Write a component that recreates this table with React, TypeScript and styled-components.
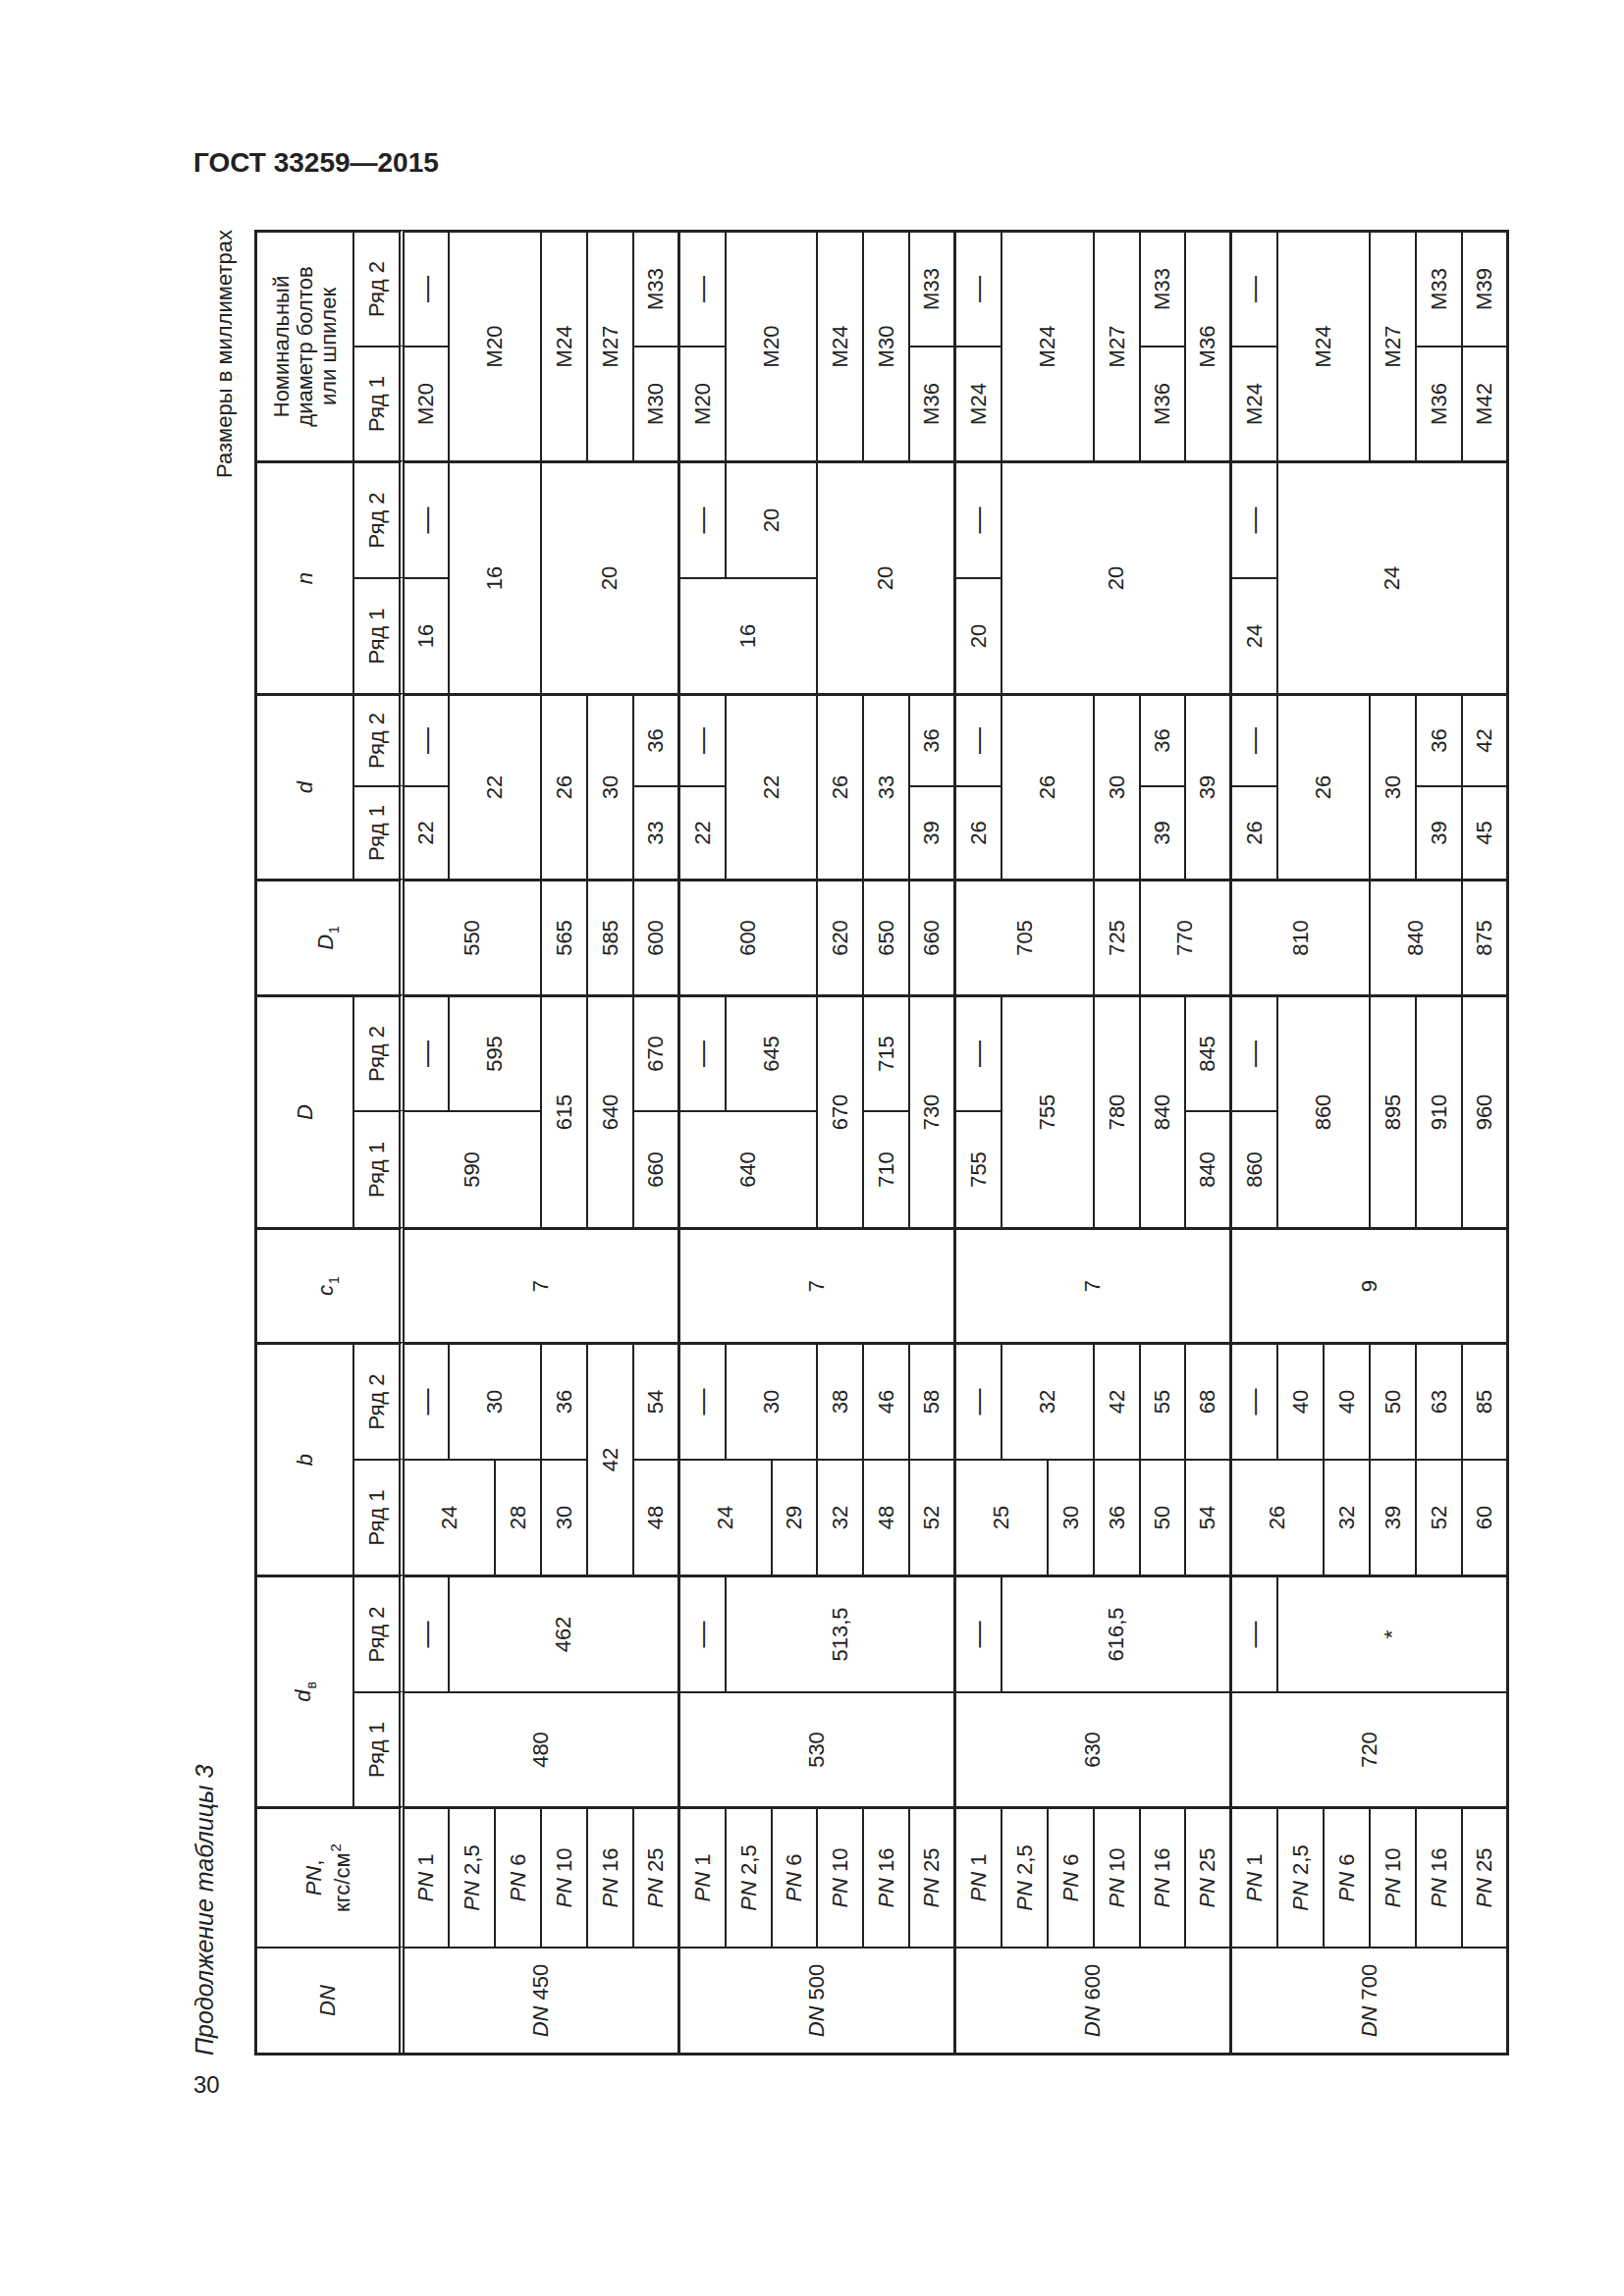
import React from 'react';
import styled, { createGlobalStyle } from 'styled-components';

const GlobalStyle = createGlobalStyle`
  html, body {
    margin: 0;
    padding: 0;
    background: #fff;
  }
  body {
    font-family: "Liberation Sans", Arial, sans-serif;
    color: #222;
  }
`;

// widths of the 16 columns of the table in its own (unrotated) orientation
const COLS = [108, 143, 117, 119, 118, 119, 117, 119, 118, 118, 95, 94, 118, 119, 117, 118];
const ROWS = Array.from({ length: 24 }, (_, i) => (i === 0 || i === 8 || i === 16 ? 46 : 47));

const THICK_RIGHT = new Set([1, 2, 4, 6, 7, 9, 10, 12, 14, 16]);
const THICK_BOTTOM = new Set([5, 11, 17, 23]);

const DASH = '—';
const PN_LIST = ['1', '2,5', '6', '10', '16', '25'];
const DN_LIST = ['450', '500', '600', '700'];

// [start row, row span, text, column span]
type Seg = [number, number, string, number?];

const DATA: Array<[number, Seg[]]> = [
  [3, [[0, 6, '480'], [6, 6, '530'], [12, 6, '630'], [18, 6, '720']]],
  [4, [[0, 1, DASH], [1, 5, '462'], [6, 1, DASH], [7, 5, '513,5'], [12, 1, DASH], [13, 5, '616,5'], [18, 1, DASH], [19, 5, '*']]],
  [5, [[0, 2, '24'], [2, 1, '28'], [3, 1, '30'], [4, 1, '42', 2], [5, 1, '48'], [6, 2, '24'], [8, 1, '29'], [9, 1, '32'], [10, 1, '48'], [11, 1, '52'], [12, 2, '25'], [14, 1, '30'], [15, 1, '36'], [16, 1, '50'], [17, 1, '54'], [18, 2, '26'], [20, 1, '32'], [21, 1, '39'], [22, 1, '52'], [23, 1, '60']]],
  [6, [[0, 1, DASH], [1, 2, '30'], [3, 1, '36'], [5, 1, '54'], [6, 1, DASH], [7, 2, '30'], [9, 1, '38'], [10, 1, '46'], [11, 1, '58'], [12, 1, DASH], [13, 2, '32'], [15, 1, '42'], [16, 1, '55'], [17, 1, '68'], [18, 1, DASH], [19, 1, '40'], [20, 1, '40'], [21, 1, '50'], [22, 1, '63'], [23, 1, '85']]],
  [7, [[0, 6, '7'], [6, 6, '7'], [12, 6, '7'], [18, 6, '9']]],
  [8, [[0, 3, '590'], [3, 1, '615', 2], [4, 1, '640', 2], [5, 1, '660'], [6, 3, '640'], [9, 1, '670', 2], [10, 1, '710'], [11, 1, '730', 2], [12, 1, '755'], [13, 2, '755', 2], [15, 1, '780', 2], [16, 1, '840', 2], [17, 1, '840'], [18, 1, '860'], [19, 2, '860', 2], [21, 1, '895', 2], [22, 1, '910', 2], [23, 1, '960', 2]]],
  [9, [[0, 1, DASH], [1, 2, '595'], [5, 1, '670'], [6, 1, DASH], [7, 2, '645'], [10, 1, '715'], [12, 1, DASH], [17, 1, '845'], [18, 1, DASH]]],
  [10, [[0, 3, '550'], [3, 1, '565'], [4, 1, '585'], [5, 1, '600'], [6, 3, '600'], [9, 1, '620'], [10, 1, '650'], [11, 1, '660'], [12, 3, '705'], [15, 1, '725'], [16, 2, '770'], [18, 3, '810'], [21, 2, '840'], [23, 1, '875']]],
  [11, [[0, 1, '22'], [1, 2, '22', 2], [3, 1, '26', 2], [4, 1, '30', 2], [5, 1, '33'], [6, 1, '22'], [7, 2, '22', 2], [9, 1, '26', 2], [10, 1, '33', 2], [11, 1, '39'], [12, 1, '26'], [13, 2, '26', 2], [15, 1, '30', 2], [16, 1, '39'], [17, 1, '39', 2], [18, 1, '26'], [19, 2, '26', 2], [21, 1, '30', 2], [22, 1, '39'], [23, 1, '45']]],
  [12, [[0, 1, DASH], [5, 1, '36'], [6, 1, DASH], [11, 1, '36'], [12, 1, DASH], [16, 1, '36'], [18, 1, DASH], [22, 1, '36'], [23, 1, '42']]],
  [13, [[0, 1, '16'], [1, 2, '16', 2], [3, 3, '20', 2], [6, 3, '16'], [9, 3, '20', 2], [12, 1, '20'], [13, 5, '20', 2], [18, 1, '24'], [19, 5, '24', 2]]],
  [14, [[0, 1, DASH], [6, 1, DASH], [7, 2, '20'], [12, 1, DASH], [18, 1, DASH]]],
  [15, [[0, 1, 'M20'], [1, 2, 'M20', 2], [3, 1, 'M24', 2], [4, 1, 'M27', 2], [5, 1, 'M30'], [6, 1, 'M20'], [7, 2, 'M20', 2], [9, 1, 'M24', 2], [10, 1, 'M30', 2], [11, 1, 'M36'], [12, 1, 'M24'], [13, 2, 'M24', 2], [15, 1, 'M27', 2], [16, 1, 'M36'], [17, 1, 'M36', 2], [18, 1, 'M24'], [19, 2, 'M24', 2], [21, 1, 'M27', 2], [22, 1, 'M36'], [23, 1, 'M42']]],
  [16, [[0, 1, DASH], [5, 1, 'M33'], [6, 1, DASH], [11, 1, 'M33'], [12, 1, DASH], [16, 1, 'M33'], [18, 1, DASH], [22, 1, 'M33'], [23, 1, 'M39']]],
];

export default function App() {
  const cells: React.ReactNode[] = [];

  DN_LIST.forEach((dn, g) => {
    cells.push(
      <Cell key={`dn${g}`} $c={1} $cs={1} $r={g * 6 + 3} $rs={6} $br={2} $bb={3}>
        <span><Sym>DN</Sym> {dn}</span>
      </Cell>
    );
    PN_LIST.forEach((pn, i) => {
      const row = g * 6 + i;
      cells.push(
        <Cell key={`pn${row}`} $c={2} $cs={1} $r={row + 3} $rs={1} $br={3} $bb={THICK_BOTTOM.has(row) ? 3 : 2}>
          <span><Sym>PN</Sym> {pn}</span>
        </Cell>
      );
    });
  });

  DATA.forEach(([col, segs]) => {
    segs.forEach(([start, span, text, cs = 1]) => {
      const lastCol = col + cs - 1;
      const lastRow = start + span - 1;
      cells.push(
        <Cell
          key={`${col}-${start}`}
          $c={col}
          $cs={cs}
          $r={start + 3}
          $rs={span}
          $br={THICK_RIGHT.has(lastCol) ? 3 : 2}
          $bb={THICK_BOTTOM.has(lastRow) ? 3 : 2}
        >
          {text === DASH ? <Dash>{DASH}</Dash> : text}
        </Cell>
      );
    });
  });

  return (
    <Page>
      <GlobalStyle />
      <Title>ГОСТ 33259—2015</Title>
      <Frame>
        <Sheet>
          <CaptionLeft>Продолжение таблицы 3</CaptionLeft>
          <CaptionRight>Размеры в миллиметрах</CaptionRight>
          <Table>
            <Cell $c={1} $cs={1} $r={1} $rs={2} $br={2} $bb={2} $double><Sym>DN</Sym></Cell>
            <Cell $c={2} $cs={1} $r={1} $rs={2} $br={3} $bb={2} $double>
              <span><Sym>PN</Sym>,<br />кгс/см<Sup>2</Sup></span>
            </Cell>

            <Cell $c={3} $cs={2} $r={1} $rs={1} $br={3} $bb={2}><span><Sym>d</Sym><Sub>в</Sub></span></Cell>
            <Cell $c={3} $cs={1} $r={2} $rs={1} $br={2} $bb={2} $double>Ряд 1</Cell>
            <Cell $c={4} $cs={1} $r={2} $rs={1} $br={3} $bb={2} $double>Ряд 2</Cell>

            <Cell $c={5} $cs={2} $r={1} $rs={1} $br={3} $bb={2}><Sym>b</Sym></Cell>
            <Cell $c={5} $cs={1} $r={2} $rs={1} $br={2} $bb={2} $double>Ряд 1</Cell>
            <Cell $c={6} $cs={1} $r={2} $rs={1} $br={3} $bb={2} $double>Ряд 2</Cell>

            <Cell $c={7} $cs={1} $r={1} $rs={2} $br={3} $bb={2} $double><span><Sym>c</Sym><Sub>1</Sub></span></Cell>

            <Cell $c={8} $cs={2} $r={1} $rs={1} $br={3} $bb={2}><Sym>D</Sym></Cell>
            <Cell $c={8} $cs={1} $r={2} $rs={1} $br={2} $bb={2} $double>Ряд 1</Cell>
            <Cell $c={9} $cs={1} $r={2} $rs={1} $br={3} $bb={2} $double>Ряд 2</Cell>

            <Cell $c={10} $cs={1} $r={1} $rs={2} $br={3} $bb={2} $double><span><Sym>D</Sym><Sub>1</Sub></span></Cell>

            <Cell $c={11} $cs={2} $r={1} $rs={1} $br={3} $bb={2}><Sym>d</Sym></Cell>
            <Cell $c={11} $cs={1} $r={2} $rs={1} $br={2} $bb={2} $double>Ряд 1</Cell>
            <Cell $c={12} $cs={1} $r={2} $rs={1} $br={3} $bb={2} $double>Ряд 2</Cell>

            <Cell $c={13} $cs={2} $r={1} $rs={1} $br={3} $bb={2}><Sym>n</Sym></Cell>
            <Cell $c={13} $cs={1} $r={2} $rs={1} $br={2} $bb={2} $double>Ряд 1</Cell>
            <Cell $c={14} $cs={1} $r={2} $rs={1} $br={3} $bb={2} $double>Ряд 2</Cell>

            <Cell $c={15} $cs={2} $r={1} $rs={1} $br={3} $bb={2}>
              <HeadText>Номинальный<br />диаметр болтов<br />или шпилек</HeadText>
            </Cell>
            <Cell $c={15} $cs={1} $r={2} $rs={1} $br={2} $bb={2} $double>Ряд 1</Cell>
            <Cell $c={16} $cs={1} $r={2} $rs={1} $br={3} $bb={2} $double>Ряд 2</Cell>

            {cells}
          </Table>
        </Sheet>
      </Frame>
      <PageNum>30</PageNum>
    </Page>
  );
}

const Page = styled.div`
  width: 1654px;
  min-height: 2339px;
  box-sizing: border-box;
  padding: 150px 0 0 197px;
  background: #fff;
`;

const Title = styled.div`
  font-size: 28px;
  line-height: 32px;
  font-weight: bold;
  color: #222;
`;

const Frame = styled.div`
  margin-top: 52px;
  width: 1340px;
  height: 1860px;
`;

const Sheet = styled.div`
  width: 1860px;
  transform-origin: top left;
  transform: translateY(1860px) rotate(-90deg);
`;

const CaptionLeft = styled.div`
  font-size: 25px;
  line-height: 22px;
  height: 22px;
  font-style: italic;
  white-space: nowrap;
`;

const CaptionRight = styled.div`
  font-size: 22px;
  line-height: 20px;
  height: 20px;
  margin-bottom: 20px;
  text-align: right;
  white-space: nowrap;
`;

const Table = styled.div`
  display: grid;
  grid-template-columns: ${COLS.map((w) => `${w}px`).join(' ')};
  grid-template-rows: 99px 51px ${ROWS.map((h) => `${h}px`).join(' ')};
  border-top: 3px solid #222;
  border-left: 3px solid #222;
`;

const Cell = styled.div<{ $c: number; $cs: number; $r: number; $rs: number; $br: number; $bb: number; $double?: boolean }>`
  grid-column: ${(p) => p.$c} / span ${(p) => p.$cs};
  grid-row: ${(p) => p.$r} / span ${(p) => p.$rs};
  box-sizing: border-box;
  display: flex;
  align-items: center;
  justify-content: center;
  text-align: center;
  border-right: ${(p) => p.$br}px solid #222;
  border-bottom: ${(p) => (p.$double ? '6px double #222' : `${p.$bb}px solid #222`)};
  font-size: 22px;
  line-height: 1.15;
  color: #222;
  white-space: nowrap;
`;

const Sym = styled.i`
  font-style: italic;
`;

const Sub = styled.span`
  font-size: 14px;
  font-style: normal;
  vertical-align: -6px;
  margin-left: 1px;
`;

const Sup = styled.span`
  font-size: 15px;
  vertical-align: 9px;
  margin-left: 1px;
`;

const Dash = styled.span`
  font-size: 27px;
  line-height: 1;
`;

const HeadText = styled.span`
  line-height: 24px;
`;

const PageNum = styled.div`
  margin-top: 16px;
  font-size: 24px;
  line-height: 28px;
  color: #222;
`;
